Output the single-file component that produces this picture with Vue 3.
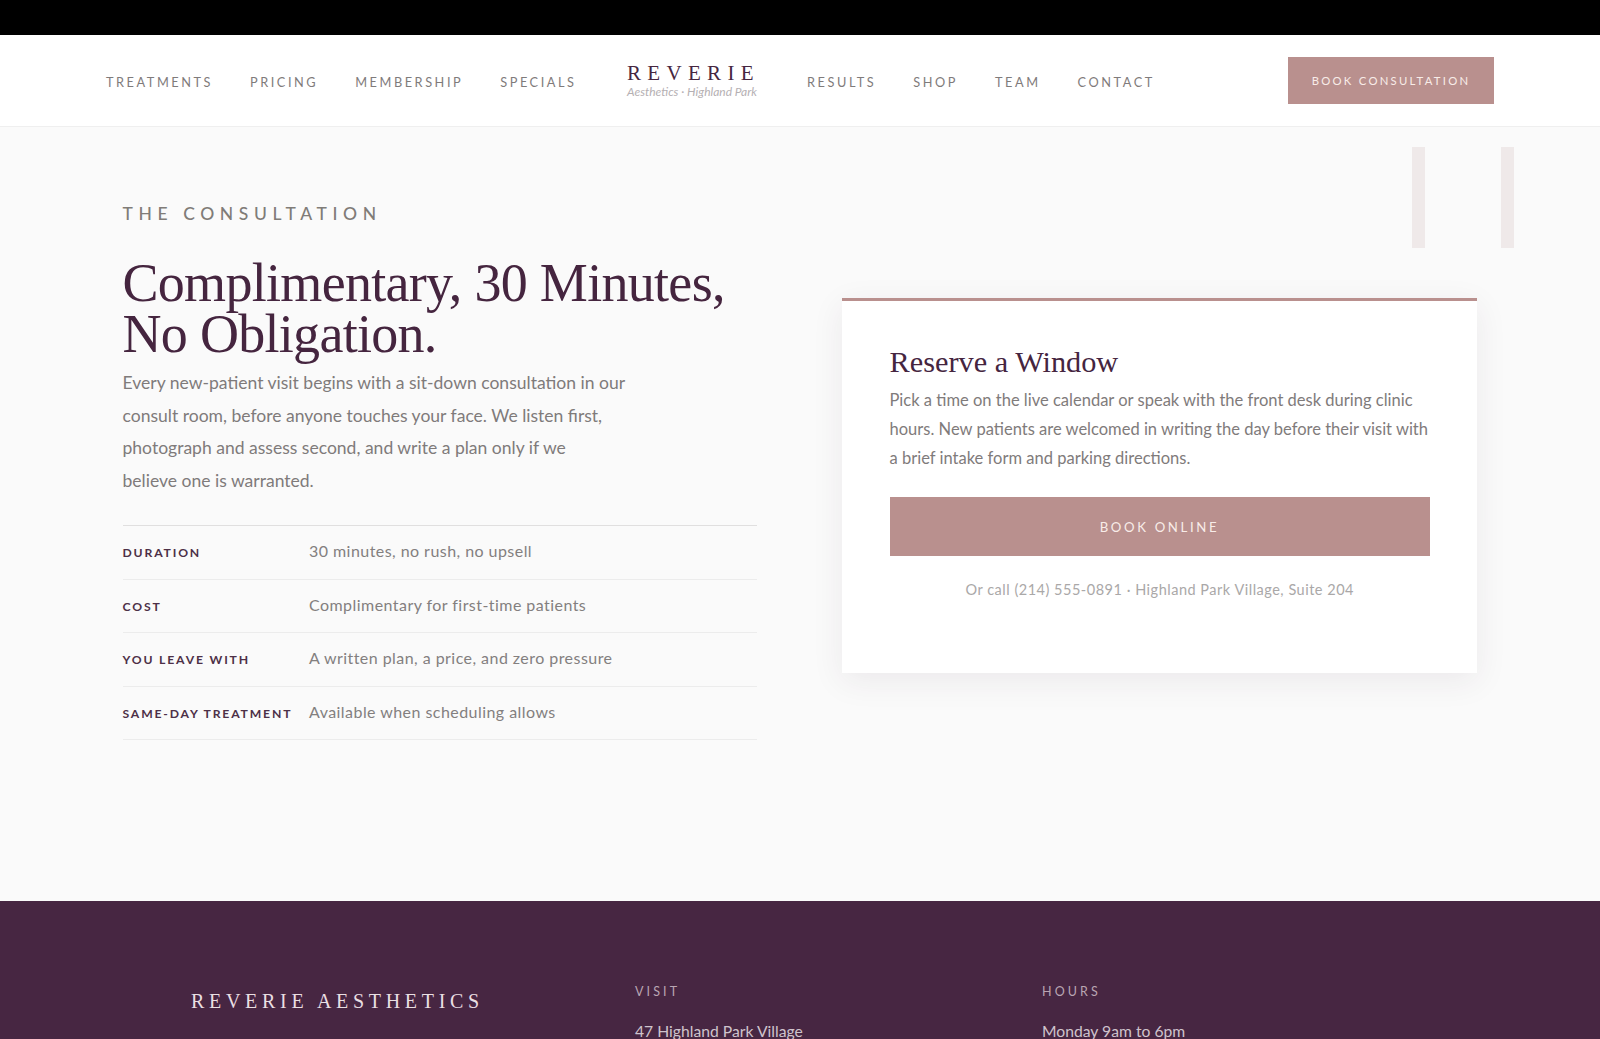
<script setup>
const leftLinks = ['TREATMENTS', 'PRICING', 'MEMBERSHIP', 'SPECIALS']
const rightLinks = ['RESULTS', 'SHOP', 'TEAM', 'CONTACT']
const rows = [
  ['DURATION', '30 minutes, no rush, no upsell'],
  ['COST', 'Complimentary for first-time patients'],
  ['YOU LEAVE WITH', 'A written plan, a price, and zero pressure'],
  ['SAME-DAY TREATMENT', 'Available when scheduling allows'],
]
</script>

<template>
  <div class="page">
    <div class="topbar"></div>
    <header class="nav">
      <nav class="links">
        <a v-for="l in leftLinks" :key="l">{{ l }}</a>
      </nav>
      <div class="logo">
        <div class="logo-name">REVERIE</div>
        <div class="logo-sub">Aesthetics · Highland Park</div>
      </div>
      <nav class="links">
        <a v-for="l in rightLinks" :key="l">{{ l }}</a>
      </nav>
      <button class="nav-cta">BOOK CONSULTATION</button>
    </header>

    <main class="main">
      <span class="deco deco-a"></span>
      <span class="deco deco-b"></span>
      <section class="intro">
        <div class="eyebrow">THE CONSULTATION</div>
        <h1>Complimentary, 30 Minutes,<br />No Obligation.</h1>
        <p class="lead">Every new-patient visit begins with a sit-down consultation in our<br />consult room, before anyone touches your face. We listen first,<br />photograph and assess second, and write a plan only if we<br />believe one is warranted.</p>
        <div class="facts">
          <div v-for="r in rows" :key="r[0]" class="fact">
            <div class="fact-label">{{ r[0] }}</div>
            <div class="fact-value">{{ r[1] }}</div>
          </div>
        </div>
      </section>
      <aside class="card">
        <h2>Reserve a Window</h2>
        <p>Pick a time on the live calendar or speak with the front desk during clinic<br />hours. New patients are welcomed in writing the day before their visit with<br />a brief intake form and parking directions.</p>
        <button class="book">BOOK ONLINE</button>
        <div class="note">Or call (214) 555-0891 · Highland Park Village, Suite 204</div>
      </aside>
    </main>

    <footer class="footer">
      <div class="foot-brand">REVERIE AESTHETICS</div>
      <div class="foot-col">
        <div class="foot-head">VISIT</div>
        <div class="foot-text">47 Highland Park Village</div>
      </div>
      <div class="foot-col">
        <div class="foot-head">HOURS</div>
        <div class="foot-text">Monday 9am to 6pm</div>
      </div>
    </footer>
  </div>
</template>

<style>
html, body { margin: 0; background: #fafafa; }
</style>

<style scoped>
.page {
  height: 1039px;
  overflow: hidden;
  display: flex;
  flex-direction: column;
  font-family: Lato, "Noto Sans", sans-serif;
  background: #fafafa;
}
.topbar { height: 35px; background: #000; flex: none; }
.nav {
  height: 91px;
  flex: none;
  display: flex;
  align-items: center;
  padding: 0 106px;
  background: #fff;
  border-bottom: 1px solid #efefef;
}
.links { display: flex; gap: 37px; padding-top: 3px; }
.links a {
  font-size: 12.75px;
  letter-spacing: 0.2em;
  color: #7f7b7b;
  white-space: nowrap;
}
.logo { margin: 0 50px 0 50.5px; width: 130px; }
.logo-name {
  font-family: "Liberation Serif", serif;
  font-size: 21px;
  line-height: 24px;
  letter-spacing: 0.3em;
  color: #46263f;
  white-space: nowrap;
}
.logo-sub {
  font-size: 12px;
  line-height: 14px;
  margin-bottom: 2px;
  font-style: italic;
  color: #b5b0b3;
  white-space: nowrap;
}
.nav-cta {
  margin-left: auto;
  width: 206px;
  height: 47px;
  border: 0;
  padding: 0;
  background: #b9908e;
  color: #f8ece8;
  font-family: inherit;
  font-size: 11.3px;
  letter-spacing: 0.2em;
}
.main {
  position: relative;
  height: 774px;
  flex: none;
  box-sizing: border-box;
  padding: 77px 123px 0 122.5px;
  display: grid;
  grid-template-columns: 634.5px 635px;
  column-gap: 85px;
  align-items: start;
}
.deco {
  position: absolute;
  top: 20px;
  width: 12.5px;
  height: 101px;
  background: #efe9e9;
}
.deco-a { left: 1412px; }
.deco-b { left: 1501px; }
.eyebrow {
  font-size: 17.5px;
  line-height: 20px;
  font-weight: 500;
  letter-spacing: 0.32em;
  color: #807c78;
}
h1 {
  margin: 34px 0 0;
  font-family: "Liberation Serif", serif;
  font-weight: 400;
  font-size: 54px;
  letter-spacing: -0.7px;
  line-height: 51px;
  color: #45253f;
  white-space: nowrap;
}
.lead {
  margin: 7px 0 0;
  font-size: 17.55px;
  line-height: 32.6px;
  color: #7f7b7b;
  white-space: nowrap;
}
.facts { margin-top: 28px; border-top: 1px solid #e0dfdf; }
.fact {
  display: flex;
  align-items: center;
  height: 52.5px;
  border-bottom: 1px solid #ececec;
}
.fact-label {
  width: 186.5px;
  flex: none;
  font-size: 12.2px;
  font-weight: 700;
  letter-spacing: 0.15em;
  color: #4d3047;
  white-space: nowrap;
}
.fact-value {
  font-size: 16px;
  letter-spacing: 0.028em;
  margin-top: -4px;
  color: #837f7f;
  white-space: nowrap;
}
.card {
  margin-top: 94px;
  height: 375px;
  box-sizing: border-box;
  padding: 43px 47px 0 47.5px;
  background: #fff;
  border-top: 3px solid #b9908e;
  box-shadow: 0 8px 30px rgba(70, 40, 60, 0.08);
}
h2 {
  margin: 0;
  font-family: "Liberation Serif", serif;
  font-weight: 400;
  font-size: 30.3px;
  line-height: 36px;
  color: #45253f;
  white-space: nowrap;
}
.card p {
  margin: 6px 0 0;
  font-size: 16.52px;
  line-height: 29px;
  color: #7f7b7b;
  white-space: nowrap;
}
.book {
  display: block;
  width: 540px;
  height: 59px;
  margin-top: 24px;
  border: 0;
  padding: 0;
  background: #b9908e;
  color: #f8ece8;
  font-family: inherit;
  font-size: 13.2px;
  letter-spacing: 0.2em;
}
.note {
  margin-top: 24px;
  text-align: center;
  font-size: 14.5px;
  line-height: 20px;
  letter-spacing: 0.035em;
  color: #aaa8a8;
  white-space: nowrap;
}
.footer {
  flex: 1;
  display: grid;
  grid-template-columns: 444px 407px 1fr;
  padding: 83px 0 0 191px;
  background: #472642;
}
.foot-brand {
  font-family: "Liberation Serif", serif;
  font-size: 20px;
  line-height: 24px;
  margin-top: 5px;
  letter-spacing: 0.235em;
  color: #eadfe3;
  white-space: nowrap;
}
.foot-head {
  font-size: 12.5px;
  line-height: 16px;
  letter-spacing: 0.25em;
  color: #b9a5b2;
}
.foot-text {
  margin-top: 20px;
  font-size: 15.7px;
  line-height: 22px;
  color: #cfc3cc;
  white-space: nowrap;
}
</style>
